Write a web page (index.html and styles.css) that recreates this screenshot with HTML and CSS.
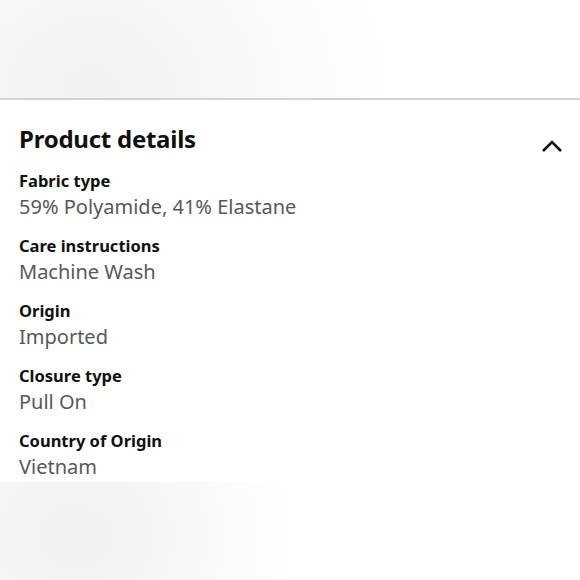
FILE: index.html
```html
<!DOCTYPE html>
<html>
<head>
<meta charset="utf-8">
<link rel="stylesheet" href="styles.css">
</head>
<body>
<div class="band band-top"></div>
<section class="details">
  <div class="header">
    <h2 class="title">Product details</h2>
    <svg class="chevron" width="22" height="14" viewBox="0 0 22 14"><path d="M2 12 L11 3 L20 12" fill="none" stroke="#0f1111" stroke-width="2.6"/></svg>
  </div>
  <div class="item"><div class="label">Fabric type</div><div class="value">59% Polyamide, 41% Elastane</div></div>
  <div class="item"><div class="label">Care instructions</div><div class="value">Machine Wash</div></div>
  <div class="item"><div class="label">Origin</div><div class="value">Imported</div></div>
  <div class="item"><div class="label">Closure type</div><div class="value">Pull On</div></div>
  <div class="item"><div class="label">Country of Origin</div><div class="value">Vietnam</div></div>
</section>
<div class="band band-bottom"></div>
</body>
</html>
```
FILE: styles.css
```css
html, body { margin: 0; padding: 0; background: #fff; }
body { width: 580px; height: 580px; overflow: hidden; font-family: "Noto Sans", "Open Sans", sans-serif; color: #0f1111; }
.band { width: 100%; }
.band-top {
  height: 98px;
  background: radial-gradient(ellipse 300px 260px at 90px 90px, #f1f1f1 0%, #f7f7f7 45%, #ffffff 100%);
  border-bottom: 2px solid #d2d2d2;
}
.details { box-sizing: border-box; padding: 19px 17px 0 19px; height: 382px; }
.header { display: flex; justify-content: space-between; align-items: flex-start; height: 50px; }
.title { margin: 0; font-size: 24px; line-height: 40px; font-weight: 700; letter-spacing: -0.25px; }
.chevron { margin-top: 20px; }
.item { height: 65px; }
.label { font-size: 16.5px; font-weight: 700; line-height: 24px; }
.value { font-size: 20px; line-height: 28px; color: #565959; }
.band-bottom {
  height: 98px;
  background: radial-gradient(ellipse 220px 190px at 75px 55px, #f0f0f0 0%, #f6f6f6 45%, #ffffff 100%);
}
```
